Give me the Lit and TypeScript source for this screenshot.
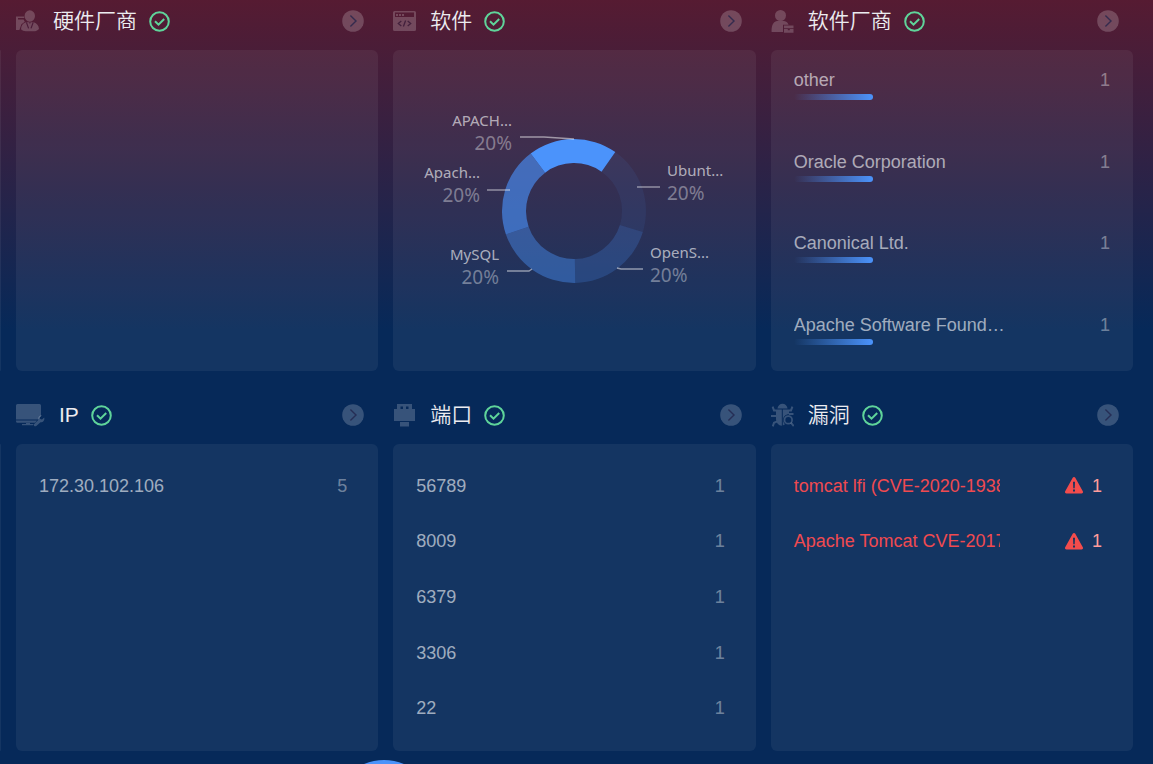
import { LitElement, html, svg, css, nothing, TemplateResult } from "lit";
import { customElement, property } from "lit/decorators.js";

type Slice = {
  name: string;
  share: string;
  opacity: number;
  from: number;
  line: string;
  x: number;
  y: number;
  anchor: "start" | "end";
};

const OUTER = 72;
const INNER = 48;
const SWEEP = 72;

const SLICES: Slice[] = [
  { name: "APACH...", share: "20%", opacity: 1, from: -37, line: "-54,-74 -30,-74 0,-72", x: -62, y: -85, anchor: "end" },
  { name: "Ubunt...", share: "20%", opacity: 0.08, from: 35, line: "63,-24 86,-24", x: 93, y: -35, anchor: "start" },
  { name: "OpenS...", share: "20%", opacity: 0.22, from: 107, line: "43,57 47,58 69,58", x: 76, y: 47, anchor: "start" },
  { name: "MySQL", share: "20%", opacity: 0.42, from: 179, line: "-42,58 -45,60 -67,60", x: -75, y: 49, anchor: "end" },
  { name: "Apach...", share: "20%", opacity: 0.62, from: 251, line: "-64,-21 -87,-21", x: -94, y: -33, anchor: "end" },
];

const point = (radius: number, degrees: number) => {
  const angle = (degrees * Math.PI) / 180;
  return `${(radius * Math.sin(angle)).toFixed(2)} ${(-radius * Math.cos(angle)).toFixed(2)}`;
};

const arc = (from: number) => {
  const to = from + SWEEP;
  return `M${point(OUTER, from)}A${OUTER} ${OUTER} 0 0 1 ${point(OUTER, to)}L${point(INNER, to)}A${INNER} ${INNER} 0 0 0 ${point(INNER, from)}Z`;
};

const ICONS: Record<string, TemplateResult> = {
  maker: html`<svg width="23" height="22" viewBox="0 0 23 22" aria-hidden="true">
    <path fill="currentColor" d="M0 6.500h8.200v1.500H2v1.500h5.600l1.200 2.300-3.400 2.400L3.400 20H0z" />
    <ellipse fill="currentColor" cx="13.800" cy="6" rx="5.200" ry="5.800" />
    <path fill="currentColor" d="M9.800 12.200h8c3 1 5 3.200 5.200 6.800-1.600 1.800-3.400 2.300-5 2.300h-8c-2 0-4-.8-5-2 .2-3.600 1.800-6.100 4.800-7.100z" />
    <path d="M10.400 12.400l2.200 6M17.200 12.400l-2.200 6" fill="none" stroke="#4a1c38" stroke-width="1.200" />
    <path d="M13 12.300h1.800l-.9 1.700z" fill="#4a1c38" />
  </svg>`,
  code: html`<svg width="23" height="22" viewBox="0 0 23 22" aria-hidden="true">
    <path fill="currentColor" fill-rule="evenodd" d="M1.500 1h20a1.500 1.500 0 0 1 1.500 1.500v17a1.500 1.500 0 0 1-1.500 1.500h-20a1.500 1.500 0 0 1-1.500-1.500v-17a1.500 1.500 0 0 1 1.500-1.500zM2 2.600v4.400h19v-4.400z" />
    <path fill="currentColor" d="M3 4h2v2H3zM6 4h2v2H6zM9 4h2v2H9z" />
    <path d="M8.300 11l-3 2.500 3 2.500M14.700 11l3 2.500-3 2.500M12.600 10.500l-2.200 6" fill="none" stroke="#43203c" stroke-width="1.300" />
  </svg>`,
  vendor: html`<svg width="23" height="24" viewBox="0 0 23 24" fill="currentColor" aria-hidden="true">
    <ellipse cx="9.500" cy="6.500" rx="5.500" ry="5.500" />
    <path d="M6 12h7c2.500.6 4 1.800 4.600 3.800H12V23H.6C.4 17.200 1.600 13 6 12z" />
    <path d="M13 16.600h9.500v2.600H13zM13 20h3.800v1.200h2V20h3.700v3.800H13z" />
  </svg>`,
  host: html`<svg width="29" height="24" viewBox="0 0 29 24" aria-hidden="true">
    <path fill="currentColor" d="M1.500 1h22A1.500 1.500 0 0 1 25 2.500v10.800l-3.200 3.200H0v-14A1.500 1.500 0 0 1 1.500 1zM0 17.500h21l-2 2.200H1.500A1.500 1.500 0 0 1 0 18.200zM10 20h4v1h3.800l-1 1.300H6V21h4z" />
    <path fill="currentColor" d="M26 12.200l-2.200 2 .4 1.800 1.800.4 2.200-2c.8 2.600-1 5-3.700 4.800L20 23.200c-1.400.6-2.700-.6-2-2l4.200-4.200c-.6-2.700 1.200-5 3.800-4.800z" />
  </svg>`,
  port: html`<svg width="23" height="24" viewBox="0 0 23 24" fill="currentColor" aria-hidden="true">
    <path fill-rule="evenodd" d="M4 1h15v5h3v12H1V6h3zM7.500 3.500v2.500h2.500V3.500zM13 3.500v2.500h2.500V3.500z" />
    <path d="M7 19h9v4.500H7z" />
  </svg>`,
  bug: html`<svg width="23" height="24" viewBox="0 0 23 24" aria-hidden="true">
    <g fill="currentColor">
      <path d="M6.400 5.600C7 2.400 9 .8 11.500.8s4.500 1.600 5.100 4.800z" />
      <path d="M5 6.600h5.800v16.200C7.600 22.600 5 19.800 5 16z" />
      <path d="M11.800 6.600h6.200v4.600c-3.800 0-5.900 2.600-5.900 5.600 0 1.800.7 3.400 1.900 4.400l-2.200 1.400z" />
    </g>
    <g fill="none" stroke="currentColor" stroke-width="2">
      <path d="M1.600 3.600l1.400 3.800h2M21.400 3.600l-1.400 3.800h-2M0 13h5M1.800 23.400l1.200-3.600 2.600-1.200M18 11h4.500" />
      <circle cx="17.300" cy="16.900" r="3.800" stroke-width="1.700" />
      <path d="M20 19.800l2.800 3.200" />
    </g>
  </svg>`,
};

@customElement("asset-card")
class AssetCard extends LitElement {
  @property() heading = "";
  @property() icon = "";

  static styles = css`
    :host {
      display: flex;
      flex-direction: column;
      min-width: 0;
    }
    .head {
      display: flex;
      align-items: center;
      flex: none;
      height: 42px;
      margin-bottom: 8px;
      padding-right: 14px;
    }
    .icon {
      display: flex;
      margin-right: 14px;
      color: rgba(255, 255, 255, 0.2);
    }
    .title {
      margin: 0 12px 0 0;
      font-size: 21px;
      line-height: 28px;
      font-weight: 350;
      color: #ececf0;
    }
    .done {
      display: block;
    }
    .more {
      display: flex;
      margin: 0 0 0 auto;
      padding: 0;
      border: 0;
      background: none;
      color: rgba(255, 255, 255, 0.2);
      cursor: pointer;
    }
    .panel {
      display: flex;
      flex-direction: column;
      flex: 1;
      min-height: 0;
      border-radius: 6px;
      background: rgba(255, 255, 255, 0.06);
    }
  `;

  render() {
    return html`
      <header class="head">
        <span class="icon">${ICONS[this.icon]}</span>
        <h2 class="title">${this.heading}</h2>
        <svg class="done" width="21" height="21" viewBox="0 0 21 21" fill="none" stroke="#5fd49a" stroke-width="2" aria-hidden="true">
          <circle cx="10.500" cy="10.500" r="9.300" />
          <path d="M6 10.300l3.500 3.400 5.700-5.700" />
        </svg>
        <button class="more" aria-label=${this.heading}>
          <svg width="22" height="22" viewBox="0 0 22 22" aria-hidden="true">
            <circle cx="11" cy="11" r="10.800" fill="currentColor" />
            <path d="M8.400 5.600l5.600 5.400-5.600 5.400" fill="none" stroke="#20214a" stroke-opacity=".75" stroke-width="1.400" />
          </svg>
        </button>
      </header>
      <div class="panel"><slot></slot></div>
    `;
  }
}

@customElement("share-ring")
class ShareRing extends LitElement {
  static styles = css`
    :host {
      display: flex;
      flex: 1;
      align-items: center;
      justify-content: center;
    }
    .ring {
      display: block;
      font-family: "Noto Sans", "Open Sans", sans-serif;
    }
    .slice {
      fill: #4b93fb;
    }
    .line {
      fill: none;
      stroke: rgba(255, 255, 255, 0.5);
      stroke-width: 1.400;
    }
    .name {
      font-size: 15px;
      fill: rgba(255, 255, 255, 0.62);
    }
    .share {
      font-size: 19px;
      fill: rgba(255, 255, 255, 0.38);
    }
  `;

  render() {
    return html`<svg class="ring" width="320" height="240" viewBox="-160 -120 320 240">
      ${SLICES.map((s) => svg`<path class="slice" d=${arc(s.from)} fill-opacity=${s.opacity} />`)}
      ${SLICES.map(
        (s) => svg`
          <polyline class="line" points=${s.line} />
          <text class="name" x=${s.x} y=${s.y} text-anchor=${s.anchor}>${s.name}</text>
          <text class="share" x=${s.x} y=${s.y + 24} text-anchor=${s.anchor}>${s.share}</text>`
      )}
    </svg>`;
  }
}

const VENDORS = ["other", "Oracle Corporation", "Canonical Ltd.", "Apache Software Foundation"];
const ADDRESSES = [["172.30.102.106", 5]];
const PORTS = [["56789", 1], ["8009", 1], ["6379", 1], ["3306", 1], ["22", 1]];
const FLAWS = [["tomcat lfi (CVE-2020-1938)", 1], ["Apache Tomcat CVE-2017-12615", 1]];

@customElement("app-root")
class AppRoot extends LitElement {
  static styles = css`
    :host {
      display: block;
      font-family: "Liberation Sans", "Noto Sans CJK SC", sans-serif;
    }
    .page {
      position: relative;
      display: grid;
      grid-template-columns: 1px repeat(3, minmax(0, 1fr));
      grid-template-rows: 371fr 357fr;
      gap: 23px 15px;
      box-sizing: border-box;
      min-height: 100vh;
      padding: 0 20px 13px 0;
      overflow: hidden;
      background: linear-gradient(#561b32, #062959 330px);
    }
    .edge {
      margin-top: 50px;
      border-radius: 0 1px 1px 0;
      background: rgba(255, 255, 255, 0.06);
    }
    .list {
      flex: 1;
      margin: 0;
      padding: 14px 31px 15px 23px;
      display: grid;
      grid-template-rows: repeat(5, 1fr);
      align-items: center;
      list-style: none;
      font-size: 18px;
      line-height: 20px;
      color: rgba(255, 255, 255, 0.6);
    }
    .vendors {
      display: flex;
      flex-direction: column;
      align-items: stretch;
      justify-content: space-between;
      padding: 20px 23px 26px;
    }
    .row {
      display: flex;
      align-items: center;
    }
    .name {
      width: 67%;
      overflow: hidden;
      white-space: nowrap;
    }
    .vendors .name {
      text-overflow: ellipsis;
    }
    .count {
      margin-left: auto;
      color: rgba(255, 255, 255, 0.4);
    }
    .bar {
      width: 25%;
      height: 6px;
      margin-top: 4px;
      border-radius: 3px;
      background: linear-gradient(to right, rgba(75, 147, 251, 0), #4b93fb);
    }
    .flaw .name {
      color: #f04a50;
    }
    .alert {
      display: block;
      margin: 0 9px 0 auto;
    }
    .flaw .count {
      margin-left: 0;
      color: #ff9c9c;
    }
    .orb {
      position: absolute;
      left: 332px;
      top: calc(100% - 4px);
      width: 104px;
      height: 104px;
      padding: 0;
      border: 0;
      border-radius: 50%;
      background: #4b93fb;
    }
  `;

  private list(items: (string | number)[][], flaw = false) {
    return html`<ul class="list">
      ${items.map(
        ([name, count]) => html`<li class="row ${flaw ? "flaw" : ""}">
          <span class="name">${name}</span>
          ${flaw
            ? html`<svg class="alert" width="18" height="17" viewBox="0 0 18 17" aria-hidden="true">
                <path fill="#f34c4c" d="M7.700.8a1.500 1.500 0 0 1 2.600 0l7.500 13.400a1.500 1.500 0 0 1-1.300 2.300h-15A1.500 1.500 0 0 1 .2 14.200z" />
                <path fill="#153560" d="M8 4.800h2l-.3 6.400H8.300zM8 12.600h2v2H8z" />
              </svg>`
            : nothing}
          <span class="count">${count}</span>
        </li>`
      )}
    </ul>`;
  }

  render() {
    return html`<main class="page">
      <div class="edge"></div>
      <asset-card heading="硬件厂商" icon="maker"></asset-card>
      <asset-card heading="软件" icon="code"><share-ring></share-ring></asset-card>
      <asset-card heading="软件厂商" icon="vendor">
        <ul class="list vendors">
          ${VENDORS.map(
            (name) => html`<li>
              <div class="row"><span class="name">${name}</span><span class="count">1</span></div>
              <div class="bar"></div>
            </li>`
          )}
        </ul>
      </asset-card>
      <div class="edge"></div>
      <asset-card heading="IP" icon="host">${this.list(ADDRESSES)}</asset-card>
      <asset-card heading="端口" icon="port">${this.list(PORTS)}</asset-card>
      <asset-card heading="漏洞" icon="bug">${this.list(FLAWS, true)}</asset-card>
      <button class="orb" aria-label="菜单"></button>
    </main>`;
  }
}
